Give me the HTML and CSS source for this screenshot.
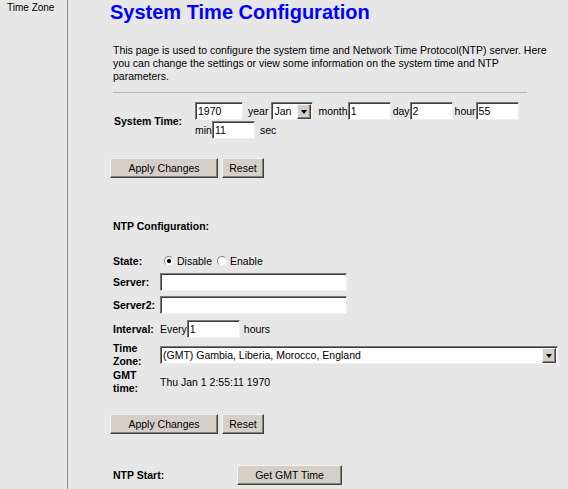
FILE: index.html
```html
<!DOCTYPE html>
<html lang="en">
<head>
    <meta charset="UTF-8">
    <title>System Time Configuration</title>
    <link rel="stylesheet" href="styles.css">
</head>
<body>
    <div class="page">
        <div class="sidebar">
            <a href="#" class="menu-item">Time Zone</a>
        </div>
        <div class="content">
            <h2 class="title">System Time Configuration</h2>
            <p class="intro">This page is used to configure the system time and Network Time Protocol(NTP) server. Here you can change the settings or view some information on the system time and NTP parameters.</p>
            <hr class="divider">

            <!-- System time -->
            <div class="systime">
                <div class="label">System Time:</div>
                <div class="systime-fields">
                    <div class="field-line">
                        <input type="text" class="text w48" value="1970"><span class="unit">year</span>
                        <span class="select-wrap w42">
                            <select class="select"><option>Jan</option></select>
                            <span class="select-arrow"></span>
                        </span>
                        <span class="unit lead">month</span><input type="text" class="text w43" value="1">
                        <span class="unit lead wide">day</span><input type="text" class="text w43" value="2">
                        <span class="unit lead wide">hour</span><input type="text" class="text w43" value="55">
                    </div>
                    <div class="field-line">
                        <span class="unit lead first">min</span><input type="text" class="text w43" value="11">
                        <span class="unit">sec</span>
                    </div>
                </div>
            </div>
            <div class="buttons first-buttons">
                <button class="btn w108">Apply Changes</button>
                <button class="btn w42">Reset</button>
            </div>

            <!-- NTP -->
            <div class="section-title">NTP Configuration:</div>
            <div class="ntp">
                <div class="row row-state">
                    <div class="label">State:</div>
                    <div class="radios">
                        <label><input type="radio" name="state" checked>Disable</label>
                        <label><input type="radio" name="state">Enable</label>
                    </div>
                </div>
                <div class="row row-server">
                    <div class="label">Server:</div>
                    <input type="text" class="text w187" value="">
                </div>
                <div class="row row-server2">
                    <div class="label">Server2:</div>
                    <input type="text" class="text w187" value="">
                </div>
                <div class="row row-interval">
                    <div class="label">Interval:</div>
                    <span class="value">Every</span><input type="text" class="text w53" value="1"><span class="unit">hours</span>
                </div>
                <div class="row row-tz">
                    <div class="label">Time<br>Zone:</div>
                    <span class="select-wrap w398">
                        <select class="select"><option>(GMT) Gambia, Liberia, Morocco, England</option></select>
                        <span class="select-arrow"></span>
                    </span>
                </div>
                <div class="row row-gmt">
                    <div class="label">GMT<br>time:</div>
                    <span class="value">Thu Jan 1 2:55:11 1970</span>
                </div>
            </div>
            <div class="buttons second-buttons">
                <button class="btn w108">Apply Changes</button>
                <button class="btn w42">Reset</button>
            </div>
            <div class="ntp-start">
                <div class="label">NTP Start:</div>
                <button class="btn w105">Get GMT Time</button>
            </div>
        </div>
    </div>
</body>
</html>
```

FILE: styles.css
```css
body {
    margin: 0;
    padding: 0;
    background-color: #e7e7e7;
    color: #000;
    font-family: "Liberation Sans", Arial, sans-serif;
    font-size: 10.5px;
}
.page {
    display: flex;
    min-height: 489px;
}
/* Sidebar */
.sidebar {
    width: 60px;
    padding: 1px 0 0 7px;
    border-right: 1px solid #8c8c8c;
    flex-shrink: 0;
}
.sidebar .menu-item {
    color: #000;
    text-decoration: none;
    font-size: 10px;
    white-space: nowrap;
}
/* Main content */
.content {
    padding-left: 42px;
    flex: 1;
}
.title {
    margin: 0;
    color: #0000ff;
    font-size: 20px;
    font-weight: bold;
    line-height: 24px;
}
.intro {
    margin: 20px 0 0 3px;
    width: 439px;
    line-height: 13px;
}
.divider {
    margin: 9px 0 0 3px;
    width: 414px;
    border: 0;
    border-top: 1px solid #b4b4b4;
    height: 0;
}
.label {
    font-weight: bold;
}
/* Inputs */
.text {
    box-sizing: border-box;
    height: 18px;
    margin: 0;
    padding: 0 2px;
    font-family: inherit;
    font-size: 10.5px;
    background: #fff;
    border: 1px solid;
    border-color: #7a7a7a #f0f0f0 #f0f0f0 #7a7a7a;
    box-shadow: inset 1px 1px 0 #3c3c3c;
    vertical-align: middle;
}
.w43 { width: 43px; }
.w48 { width: 48px; }
.w53 { width: 53px; }
.w187 { width: 187px; }
.w42 { width: 42px; }
.w105 { width: 105px; }
.w108 { width: 108px; }
.w398 { width: 398px; }
.select-wrap {
    position: relative;
    display: inline-block;
    height: 18px;
    vertical-align: middle;
}
.select {
    appearance: none;
    -webkit-appearance: none;
    box-sizing: border-box;
    width: 100%;
    height: 100%;
    margin: 0;
    padding: 0 2px;
    font-family: inherit;
    font-size: 10.5px;
    color: #000;
    background: #fff;
    border: 1px solid;
    border-color: #7a7a7a #f0f0f0 #f0f0f0 #7a7a7a;
    box-shadow: inset 1px 1px 0 #3c3c3c;
    border-radius: 0;
}
.select-arrow {
    position: absolute;
    top: 2px;
    right: 2px;
    bottom: 1px;
    width: 14px;
    box-sizing: border-box;
    background: #d4d0c8;
    border: 1px solid;
    border-color: #f4f4f4 #404040 #404040 #f4f4f4;
    box-shadow: inset -1px -1px 0 #808080;
}
.select-arrow::after {
    content: "";
    position: absolute;
    left: 3px;
    top: 5px;
    border-left: 3px solid transparent;
    border-right: 3px solid transparent;
    border-top: 4px solid #000;
}
/* Buttons */
.btn {
    box-sizing: border-box;
    height: 20px;
    margin: 0;
    padding: 0;
    font-family: inherit;
    font-size: 10.5px;
    color: #000;
    background: #d4d0c8;
    border: 1px solid;
    border-color: #f4f4f4 #404040 #404040 #f4f4f4;
    box-shadow: inset -1px -1px 0 #808080;
}
.buttons {
    display: flex;
    gap: 4px;
}
/* System time */
.systime {
    display: flex;
    align-items: center;
    margin: 9px 0 0 4px;
}
.systime .label {
    width: 81px;
}
.field-line {
    display: flex;
    align-items: center;
    height: 18px;
    margin-bottom: 1px;
}
.unit {
    padding: 0 3px 0 5px;
}
.unit.lead {
    padding-right: 0;
}
.unit.wide {
    padding-left: 2px;
}
.unit.first {
    padding-left: 0;
}
.first-buttons {
    margin: 18px 0 0 0;
}
/* NTP */
.section-title {
    margin: 42px 0 0 3px;
    font-weight: bold;
}
.ntp {
    margin: 20px 0 0 3px;
}
.row {
    display: flex;
    align-items: center;
}
.row .label {
    width: 47px;
    flex-shrink: 0;
    line-height: 13px;
}
.row-state { height: 18px; }
.row-server { margin-top: 3px; }
.row-server2 { margin-top: 5px; }
.row-interval { margin-top: 6px; }
.row-tz { margin-top: 4px; height: 26px; }
.row-gmt { margin-top: 1px; height: 26px; }
.row-interval .unit {
    padding-left: 4px;
}
.radios {
    display: flex;
    gap: 5px;
    padding-left: 4px;
}
.radios label {
    display: flex;
    align-items: center;
}
.radios input {
    appearance: none;
    -webkit-appearance: none;
    width: 10px;
    height: 10px;
    margin: 0 3px 0 0;
    border-radius: 50%;
    background: #fff;
    border: 1px solid;
    border-color: #808080 #e8e8e8 #e8e8e8 #808080;
    box-sizing: border-box;
}
.radios input:checked {
    background: radial-gradient(circle, #000 0 1.8px, #fff 2.3px);
}
.second-buttons {
    margin: 19px 0 0 0;
}
.ntp-start {
    display: flex;
    align-items: center;
    margin: 31px 0 0 3px;
}
.ntp-start .label {
    width: 124px;
}
```
